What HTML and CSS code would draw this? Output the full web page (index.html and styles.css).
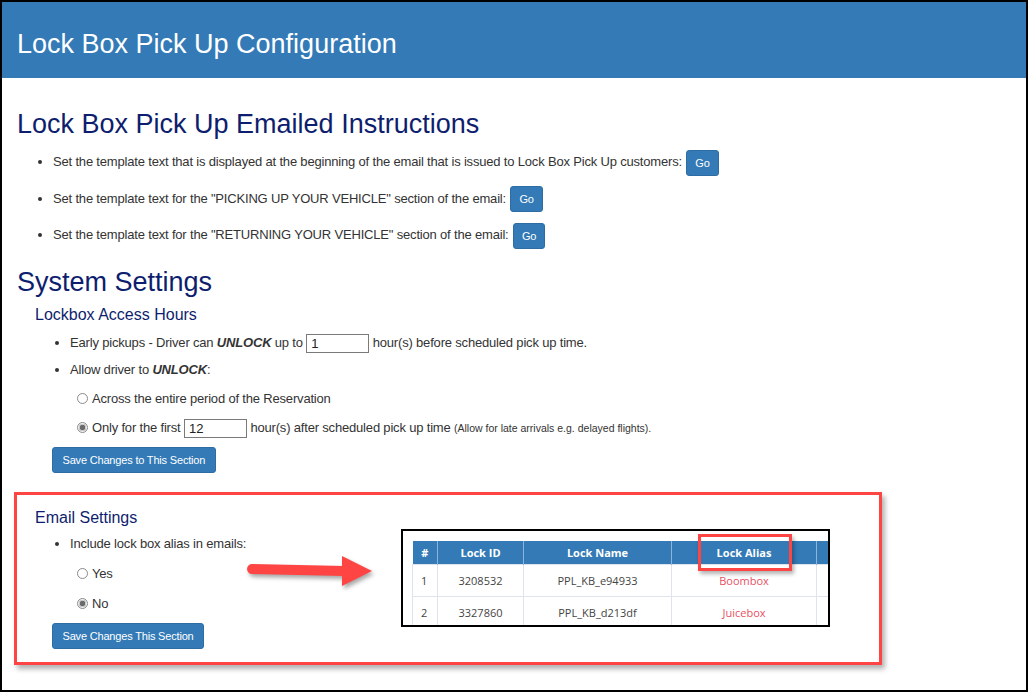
FILE: index.html
```html
<!DOCTYPE html>
<html lang="en">

<head>
  <meta charset="UTF-8">
  <title>Lock Box Pick Up Configuration</title>
  <link rel="stylesheet" href="styles.css">
</head>

<body>
  <div class="frame">
    <header class="topbar">
      <h1>Lock Box Pick Up Configuration</h1>
    </header>

    <main class="content">
      <h2 class="page-title">Lock Box Pick Up Emailed Instructions</h2>
      <ul class="link-list">
        <li>Set the template text that is displayed at the beginning of the email that is issued to Lock Box Pick Up customers: <a class="btn btn-go" href="#">Go</a></li>
        <li>Set the template text for the "PICKING UP YOUR VEHICLE" section of the email: <a class="btn btn-go" href="#">Go</a></li>
        <li>Set the template text for the "RETURNING YOUR VEHICLE" section of the email: <a class="btn btn-go" href="#">Go</a></li>
      </ul>

      <h2 class="page-title title-system">System Settings</h2>

      <!-- Lockbox access hours -->
      <section class="sub">
        <h3>Lockbox Access Hours</h3>
        <ul class="opt-list">
          <li>Early pickups - Driver can <b><i>UNLOCK</i></b> up to <input class="hours" type="text" value="1"> hour(s) before scheduled pick up time.</li>
          <li class="allow">Allow driver to <b><i>UNLOCK</i></b>:
            <label class="radio-row"><input type="radio" name="unlock">Across the entire period of the Reservation</label>
            <label class="radio-row"><input type="radio" name="unlock" checked>Only for the first <input class="hours" type="text" value="12"> hour(s) after scheduled pick up time <small>(Allow for late arrivals e.g. delayed flights).</small></label>
          </li>
        </ul>
        <button class="btn btn-save">Save Changes to This Section</button>
      </section>

      <!-- Email settings (annotated) -->
      <section class="sub highlight">
        <div class="email-col">
          <h3>Email Settings</h3>
          <ul class="opt-list">
            <li class="allow">Include lock box alias in emails:
              <label class="radio-row"><input type="radio" name="alias">Yes</label>
              <label class="radio-row"><input type="radio" name="alias" checked>No</label>
            </li>
          </ul>
          <button class="btn btn-save">Save Changes This Section</button>
        </div>

        <svg class="arrow" width="140" height="40" viewBox="0 0 140 40">
          <line x1="12" y1="17" x2="104" y2="19" stroke="#f44" stroke-width="10" stroke-linecap="round" />
          <polygon points="102,4 132,19 102,34" fill="#f44" />
        </svg>

        <div class="shot">
          <table class="lock-table">
            <thead>
              <tr>
                <th class="c-num">#</th>
                <th class="c-id">Lock ID</th>
                <th class="c-name">Lock Name</th>
                <th class="c-alias">Lock Alias</th>
                <th class="c-more"></th>
              </tr>
            </thead>
            <tbody>
              <tr>
                <td class="c-num">1</td>
                <td>3208532</td>
                <td>PPL_KB_e94933</td>
                <td class="alias">Boombox</td>
                <td></td>
              </tr>
              <tr>
                <td class="c-num">2</td>
                <td>3327860</td>
                <td>PPL_KB_d213df</td>
                <td class="alias">Juicebox</td>
                <td></td>
              </tr>
            </tbody>
          </table>
          <div class="mark"></div>
        </div>
      </section>
    </main>
  </div>
</body>

</html>
```

FILE: styles.css
```css
* {
  box-sizing: border-box;
}

body {
  margin: 0;
  background-color: #ffffff;
  color: #333333;
  font-family: "Liberation Sans", Arial, sans-serif;
  font-size: 13px;
  letter-spacing: -0.18px;
}

.frame {
  width: 1028px;
  height: 692px;
  border: 2px solid #000;
  overflow: hidden;
}

.topbar {
  background-color: #337ab7;
  height: 76px;
  padding: 8px 15px 0;
  display: flex;
  align-items: center;
}

.topbar h1 {
  margin: 0;
  font-size: 27px;
  font-weight: normal;
  letter-spacing: 0;
  color: #ffffff;
}

.content {
  padding: 0 15px;
}

.page-title {
  margin: 30px 0 0;
  font-size: 27px;
  line-height: 32px;
  font-weight: normal;
  letter-spacing: 0;
  color: #0e1e6e;
}

.title-system {
  margin-top: 17px;
}

.link-list {
  margin: 9px 0 0;
  padding-left: 36px;
}

.link-list li {
  line-height: 26px;
  margin-bottom: 10px;
}

.btn {
  display: inline-block;
  background-color: #337ab7;
  border: 1px solid #2e6da4;
  border-radius: 3px;
  color: #ffffff;
  font-family: "Liberation Sans", Arial, sans-serif;
  letter-spacing: inherit;
  text-decoration: none;
  cursor: pointer;
}

.btn-go {
  height: 26px;
  line-height: 24px;
  padding: 0 8px;
  font-size: 11px;
  vertical-align: middle;
  margin-left: 1px;
}

/* SETTINGS */
.sub {
  padding-left: 18px;
}

.sub h3 {
  margin: 7px 0 0;
  font-size: 16px;
  line-height: 20px;
  font-weight: normal;
  letter-spacing: 0;
  color: #0e1e6e;
}

.opt-list {
  margin: 8px 0 0;
  padding-left: 35px;
}

.opt-list li {
  line-height: 20px;
  margin-bottom: 7px;
}

.opt-list li.allow {
  margin-bottom: 0;
}

.radio-row {
  display: block;
  margin: 9px 0 0 7px;
  line-height: 20px;
  height: 20px;
}

.radio-row input[type="radio"] {
  appearance: none;
  -webkit-appearance: none;
  width: 11px;
  height: 11px;
  margin: 0 4px 0 0;
  border: 1px solid #8a8a8a;
  border-radius: 50%;
  background: #ffffff;
  vertical-align: -1px;
}

.radio-row input[type="radio"]:checked {
  background: radial-gradient(circle, #6a6a6a 0 2.5px, #c9c9c9 3px 3.6px, #f2f2f2 4px);
}

.hours {
  width: 63px;
  height: 19px;
  border: 1px solid #7a7a7a;
  padding: 0 4px;
  font-family: "Liberation Sans", Arial, sans-serif;
  font-size: 13px;
  color: #222;
  vertical-align: middle;
}

small {
  font-size: 10.5px;
  letter-spacing: 0;
}

.btn-save {
  height: 26px;
  margin: 9px 0 0 17px;
  padding: 0 9.5px;
  font-size: 11px;
}

/* EMAIL SETTINGS BOX */
.highlight {
  position: relative;
  display: flex;
  align-items: flex-start;
  width: 868px;
  margin: 19px 0 0 -3px;
  padding: 13px 0 13px 18px;
  border: 3px solid #f44;
  box-shadow: 3px 4px 5px rgba(0, 0, 0, 0.3);
}

.email-col {
  width: 366px;
}

.email-col h3 {
  margin-top: 0;
}

.email-col .opt-list {
  margin-top: 6px;
}

.email-col .radio-row {
  margin-top: 10px;
}

.email-col .btn-save {
  margin-top: 9px;
  margin-left: 17px;
}

.arrow {
  position: absolute;
  left: 223px;
  top: 57px;
  filter: drop-shadow(2px 3px 2px rgba(0, 0, 0, 0.35));
}

.shot {
  position: relative;
  width: 429px;
  height: 98px;
  margin-top: 21px;
  border: 2px solid #000;
  padding: 10px 0 0 9px;
  overflow: hidden;
  background: #fff;
}

.lock-table {
  table-layout: fixed;
  border-collapse: collapse;
  width: 464px;
  font-family: "Open Sans", "Noto Sans", sans-serif;
  font-size: 11px;
  letter-spacing: 0;
  color: #444;
}

.lock-table th {
  background-color: #337ab7;
  color: #fff;
  font-weight: bold;
  height: 24px;
  border-left: 1px solid #8fb2d8;
  text-align: center;
  padding: 0;
}

.lock-table th:first-child {
  border-left: none;
}

.lock-table td {
  height: 32px;
  border: 1px solid #dfe3ee;
  text-align: center;
  padding: 0;
}

.lock-table .c-num { width: 25px; }
.lock-table .c-id { width: 86px; }
.lock-table .c-name { width: 148px; }
.lock-table .c-alias { width: 145px; }
.lock-table .c-more { width: 60px; }

.lock-table td.c-num {
  text-align: left;
  padding-left: 8px;
}

.lock-table td.alias {
  color: #e8505f;
}

.mark {
  position: absolute;
  left: 295px;
  top: 3px;
  width: 94px;
  height: 37px;
  border: 3px solid #f44;
  box-shadow: 2px 3px 4px rgba(0, 0, 0, 0.3);
}
```
